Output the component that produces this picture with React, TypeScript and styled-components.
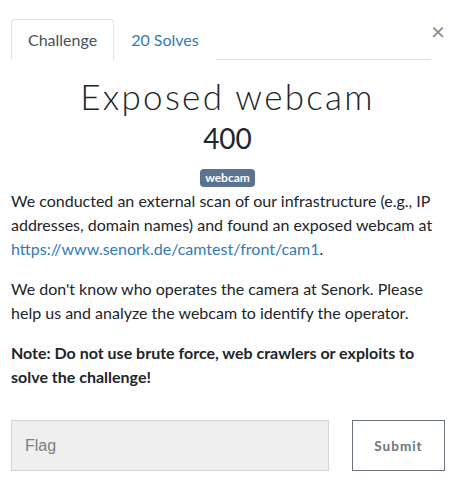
import React from "react";
import styled, { createGlobalStyle } from "styled-components";

const Global = createGlobalStyle`
  html, body { margin: 0; padding: 0; background: #fff; }
  body { font-family: Lato, "Open Sans", sans-serif; color: #212529; }
  * { box-sizing: border-box; }
`;

const Modal = styled.div`
  position: relative;
  width: 467px;
  height: 502px;
  padding: 19px 11px 0 11px;
`;

const Close = styled.button`
  position: absolute;
  top: 21px;
  right: 22px;
  border: 0;
  background: none;
  padding: 0;
  width: 14px;
  height: 20px;
  font-family: Lato, sans-serif;
  font-size: 24px;
  line-height: 20px;
  color: #888;
  cursor: pointer;
`;

const Tabs = styled.div`
  display: flex;
  width: 420px;
  border-bottom: 1px solid #dee2e6;
`;

const Tab = styled.div<{ $active?: boolean }>`
  height: 41px;
  padding: 0 16px;
  margin-bottom: -1px;
  display: flex;
  align-items: center;
  font-size: 16px;
  color: ${(p) => (p.$active ? "#495057" : "#337ab7")};
  background: #fff;
  border: 1px solid ${(p) => (p.$active ? "#dee2e6" : "transparent")};
  border-bottom-color: ${(p) => (p.$active ? "#fff" : "transparent")};
  border-radius: 4px 4px 0 0;
`;

const Header = styled.div`
  display: flex;
  flex-direction: column;
  align-items: center;
  padding-top: 16px;
  width: 433px;
`;

const Title = styled.h3`
  margin: 0;
  font-family: Lato, sans-serif;
  font-weight: 300;
  font-size: 35px;
  letter-spacing: 2.3px;
  line-height: 40px;
  color: #212529;
`;

const Points = styled.div`
  font-size: 28px;
  font-weight: 400;
  line-height: 34px;
  margin-top: 5px;
  color: #212529;
`;

const Badge = styled.span`
  margin-top: 14px;
  display: inline-block;
  background: #5b7290;
  color: #fff;
  font-weight: 700;
  font-size: 12px;
  line-height: 18px;
  padding: 0 5px;
  border-radius: 4px;
`;

const Body = styled.div`
  width: 436px;
  margin-top: 2px;
  font-size: 16px;
  line-height: 24px;
  color: #212529;
`;

const P = styled.p<{ $bold?: boolean }>`
  margin: 0 0 16px 0;
  font-weight: ${(p) => (p.$bold ? 700 : 400)};
`;

const Link = styled.a`
  color: #337ab7;
  text-decoration: none;
`;

const FormRow = styled.div`
  display: flex;
  gap: 23px;
  margin-top: 31px;
`;

const Input = styled.input`
  width: 318px;
  height: 51px;
  background: #efefef;
  border: 1px solid #d2d6dc;
  padding: 0 13px;
  font-family: "Liberation Sans", Arial, sans-serif;
  font-size: 16px;
  color: #495057;
  &::placeholder { color: #7a7f85; }
`;

const Submit = styled.button`
  width: 93px;
  height: 51px;
  background: #fff;
  border: 1px solid #6c757d;
  font-family: Lato, sans-serif;
  font-weight: 700;
  font-size: 13.5px;
  letter-spacing: 1px;
  color: #6c757d;
`;

export default function App() {
  return (
    <>
      <Global />
      <Modal>
        <Close aria-label="Close">×</Close>
        <Tabs>
          <Tab $active>Challenge</Tab>
          <Tab>20 Solves</Tab>
        </Tabs>
        <Header>
          <Title>Exposed webcam</Title>
          <Points>400</Points>
          <Badge>webcam</Badge>
        </Header>
        <Body>
          <P>
            We conducted an external scan of our infrastructure (e.g., IP addresses, domain names) and found an exposed webcam at{" "}
            <Link href="#">https://www.senork.de/camtest/front/cam1</Link>.
          </P>
          <P>
            We don't know who operates the camera at Senork. Please help us and analyze the webcam to identify the operator.
          </P>
          <P $bold>Note: Do not use brute force, web crawlers or exploits to solve the challenge!</P>
        </Body>
        <FormRow>
          <Input placeholder="Flag" />
          <Submit>Submit</Submit>
        </FormRow>
      </Modal>
    </>
  );
}
